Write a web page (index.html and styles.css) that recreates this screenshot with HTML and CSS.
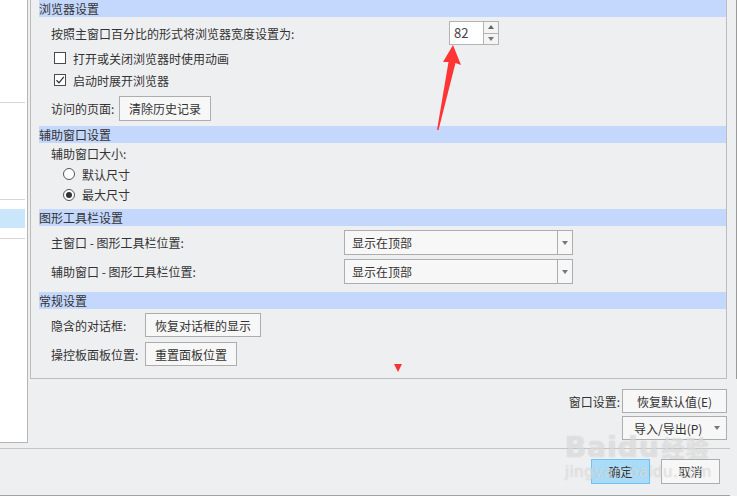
FILE: index.html
```html
<!DOCTYPE html>
<html lang="zh-CN">
<head>
    <meta charset="UTF-8">
    <title>选项 - 浏览器设置</title>
    <link rel="stylesheet" href="styles.css">
</head>
<body>
    <div class="window">
        <div class="top">
            <div class="nav">
                <div class="nav-item nav-first"></div>
                <div class="nav-item nav-second"></div>
                <div class="nav-gap"></div>
                <div class="nav-sel"></div>
                <div class="nav-gap nav-gap-last"></div>
            </div>

            <div class="right-col">
                <div class="panel">
                    <div class="sect-head">浏览器设置</div>
                    <div class="row row-spin">
                        <span class="lbl lbl-spin">按照主窗口百分比的形式将浏览器宽度设置为:</span>
                        <div class="spin">
                            <div class="spin-val">82</div>
                            <div class="spin-btns">
                                <div class="spin-up"><span class="tri-up"></span></div>
                                <div class="spin-down"><span class="tri-down"></span></div>
                            </div>
                        </div>
                    </div>
                    <div class="row row-check row-check-1">
                        <span class="check"></span>
                        <span>打开或关闭浏览器时使用动画</span>
                    </div>
                    <div class="row row-check">
                        <span class="check checked">
                            <svg width="10" height="10" viewBox="0 0 10 10"><path d="M1.5 5.2 L4 7.8 L8.8 1.8" fill="none" stroke="#333" stroke-width="1.3"/></svg>
                        </span>
                        <span>启动时展开浏览器</span>
                    </div>
                    <div class="row row-visit">
                        <span class="lbl lbl-visit">访问的页面:</span>
                        <button class="btn btn-clear">清除历史记录</button>
                    </div>

                    <div class="sect-head sect-gap">辅助窗口设置</div>
                    <div class="row row-sub">辅助窗口大小:</div>
                    <div class="row row-radio">
                        <span class="radio"></span>
                        <span>默认尺寸</span>
                    </div>
                    <div class="row row-radio row-radio-2">
                        <span class="radio on"></span>
                        <span>最大尺寸</span>
                    </div>

                    <div class="sect-head sect-gap-tight">图形工具栏设置</div>
                    <div class="row row-select">
                        <span class="lbl lbl-select">主窗口 - 图形工具栏位置:</span>
                        <div class="select">
                            <span class="select-text">显示在顶部</span>
                            <span class="select-arrow"><span class="tri-down"></span></span>
                        </div>
                    </div>
                    <div class="row row-select">
                        <span class="lbl lbl-select">辅助窗口 - 图形工具栏位置:</span>
                        <div class="select">
                            <span class="select-text">显示在顶部</span>
                            <span class="select-arrow"><span class="tri-down"></span></span>
                        </div>
                    </div>

                    <div class="sect-head sect-gap-wide">常规设置</div>
                    <div class="row row-general">
                        <span class="lbl lbl-general">隐含的对话框:</span>
                        <button class="btn btn-general">恢复对话框的显示</button>
                    </div>
                    <div class="row row-general row-general-2">
                        <span class="lbl lbl-general">操控板面板位置:</span>
                        <button class="btn btn-general">重置面板位置</button>
                    </div>

                    <span class="more-mark"></span>
                </div>

                <div class="win-set">
                    <div class="ws-row">
                        <span class="ws-lbl">窗口设置:</span>
                        <button class="btn btn-ws">恢复默认值(E)</button>
                    </div>
                    <div class="ws-row ws-row-2">
                        <button class="btn btn-ws btn-drop">导入/导出(P)<span class="tri-down"></span></button>
                    </div>
                </div>
            </div>

            <div class="edge"></div>
        </div>

        <div class="footer">
            <button class="btn btn-foot btn-ok">确定</button>
            <button class="btn btn-foot">取消</button>
        </div>

        <!-- annotation arrow pointing at the width box -->
        <svg class="red-arrow" width="737" height="496" viewBox="0 0 737 496">
            <polygon points="453,45 461,65 455.5,63 438.5,130 437,130 448.5,62 443,62" fill="#ff3535"/>
        </svg>

        <div class="watermark">
            <div class="wm-big">Baidu<span class="wm-cn">经验</span></div>
            <div class="wm-small">jingyan.baidu.com</div>
        </div>
    </div>
</body>
</html>
```

FILE: styles.css
```css
* {
    margin: 0;
    padding: 0;
    box-sizing: border-box;
}

body {
    width: 737px;
    height: 496px;
    overflow: hidden;
    background: #eeeff1;
    font-family: "Noto Sans CJK SC", "Microsoft YaHei", sans-serif;
    font-size: 12px;
    color: #333;
}

.window {
    position: relative;
    width: 737px;
    height: 496px;
}

.top {
    display: flex;
    height: 448px;
}

/* left tree list */
.nav {
    width: 28px;
    height: 443px;
    background: #fff;
    border-right: 1px solid #b5b5b5;
    border-bottom: 1px solid #b5b5b5;
    margin-right: 2px;
}

.nav-item {
    border-bottom: 1px solid #d6d6d6;
    margin-right: 2px;
}

.nav-first {
    height: 103px;
}

.nav-second {
    height: 97px;
}

.nav-gap {
    height: 9px;
}

.nav-sel {
    height: 19px;
    background: #c9e6fb;
    margin-right: 2px;
}

.nav-gap-last {
    height: 11px;
    border-bottom: 1px solid #d6d6d6;
    margin-right: 2px;
}

.right-col {
    width: 700px;
    padding-right: 3px;
}

.panel {
    position: relative;
    height: 379px;
    border-left: 1px solid #bdbdbd;
    border-right: 1px solid #bdbdbd;
    border-bottom: 1px solid #bdbdbd;
    padding-left: 8px;
}

.sect-head {
    height: 17px;
    line-height: 17px;
    background: #c4d8fd;
    color: #333;
}

.sect-gap {
    margin-top: 5px;
}

.sect-gap-tight {
    margin-top: 4px;
}

.sect-gap-wide {
    margin-top: 8px;
}

.row {
    display: flex;
    align-items: center;
    padding-left: 12px;
}

.lbl {
    flex-shrink: 0;
}

.row-spin {
    height: 24px;
    margin-top: 4px;
}

.lbl-spin {
    width: 398px;
}

.spin {
    display: flex;
    height: 24px;
}

.spin-val {
    width: 35px;
    background: #fff;
    border: 1px solid #b3b3b3;
    padding-left: 4px;
    font-size: 13px;
    line-height: 22px;
    color: #444;
}

.spin-btns {
    width: 15px;
    border: 1px solid #b3b3b3;
    border-left: none;
    display: flex;
    flex-direction: column;
}

.spin-up,
.spin-down {
    flex: 1;
    display: flex;
    align-items: center;
    justify-content: center;
    background: #f4f4f4;
}

.spin-up {
    border-bottom: 1px solid #b3b3b3;
}

.tri-up {
    width: 0;
    height: 0;
    border-left: 3px solid transparent;
    border-right: 3px solid transparent;
    border-bottom: 4px solid #666;
}

.tri-down {
    width: 0;
    height: 0;
    border-left: 3.5px solid transparent;
    border-right: 3.5px solid transparent;
    border-top: 4px solid #777;
}

.row-check {
    height: 22px;
    padding-left: 15px;
}

.row-check-1 {
    margin-top: 2px;
}

.check {
    width: 12px;
    height: 12px;
    border: 1px solid #4a4a4a;
    background: #fff;
    margin-right: 7px;
    display: flex;
    align-items: center;
    justify-content: center;
}

.row-visit {
    height: 25px;
    margin-top: 5px;
}

.lbl-visit {
    width: 68px;
}

.btn {
    font-family: inherit;
    font-size: 12px;
    color: #333;
    background: #f7f7f7;
    border: 1px solid #adadad;
    height: 25px;
}

.btn-clear {
    width: 92px;
}

.row-sub {
    height: 21px;
}

.row-radio {
    height: 20px;
    padding-left: 24px;
}

.row-radio-2 {
    height: 21px;
}

.radio {
    width: 12px;
    height: 12px;
    border: 1px solid #555;
    border-radius: 50%;
    background: #fff;
    margin-right: 7px;
    display: flex;
    align-items: center;
    justify-content: center;
}

.radio.on::after {
    content: "";
    width: 6px;
    height: 6px;
    border-radius: 50%;
    background: #333;
}

.row-select {
    height: 25px;
    margin-top: 4px;
}

.lbl-select {
    width: 293px;
}

.select {
    display: flex;
    width: 229px;
    height: 25px;
    background: #f7f7f7;
    border: 1px solid #adadad;
}

.select-text {
    flex: 1;
    padding-left: 7px;
    line-height: 23px;
}

.select-arrow {
    width: 15px;
    border-left: 1px solid #adadad;
    display: flex;
    align-items: center;
    justify-content: center;
}

.row-general {
    height: 24px;
    margin-top: 4px;
}

.row-general-2 {
    margin-top: 5px;
}

.lbl-general {
    width: 94px;
}

.btn-general {
    height: 24px;
    padding: 0 9px;
}

.more-mark {
    position: absolute;
    left: 363px;
    top: 364px;
    width: 0;
    height: 0;
    border-left: 4px solid transparent;
    border-right: 4px solid transparent;
    border-top: 8px solid #f53535;
}

/* window settings block under the panel */
.win-set {
    padding-top: 10px;
}

.ws-row {
    display: flex;
    justify-content: flex-end;
    align-items: center;
}

.ws-row-2 {
    margin-top: 3px;
}

.ws-lbl {
    margin-right: 2px;
}

.btn-ws {
    width: 105px;
    height: 24px;
}

.btn-drop {
    display: flex;
    align-items: center;
    padding-left: 11px;
    padding-right: 6px;
    justify-content: space-between;
}

.edge {
    width: 1px;
    height: 379px;
    margin-left: 6px;
    background: #9a9a9a;
}

.footer {
    display: flex;
    justify-content: flex-end;
    gap: 11px;
    width: 730px;
    height: 48px;
    border-top: 1px solid #c6c6c6;
    border-bottom: 1px solid #a3a3a3;
    padding: 10px 10px 0 0;
}

.btn-foot {
    width: 59px;
    height: 25px;
}

.btn-ok {
    background: #a9dcf9;
    border-color: #6ec3f2;
}

.red-arrow {
    position: absolute;
    left: 0;
    top: 0;
    pointer-events: none;
}

.watermark {
    position: absolute;
    left: 565px;
    top: 432px;
    color: rgba(255, 255, 255, 0.55);
    text-shadow: 0 0 1px rgba(120, 120, 120, 0.45);
    font-family: "DejaVu Sans", sans-serif;
    pointer-events: none;
}

.wm-big {
    font-size: 28px;
    font-weight: bold;
    line-height: 30px;
    letter-spacing: 1px;
}

.wm-cn {
    font-family: "Noto Sans CJK SC", sans-serif;
    font-size: 23px;
    margin-left: 2px;
}

.wm-small {
    font-size: 15px;
    line-height: 18px;
    letter-spacing: 0.5px;
}
```
